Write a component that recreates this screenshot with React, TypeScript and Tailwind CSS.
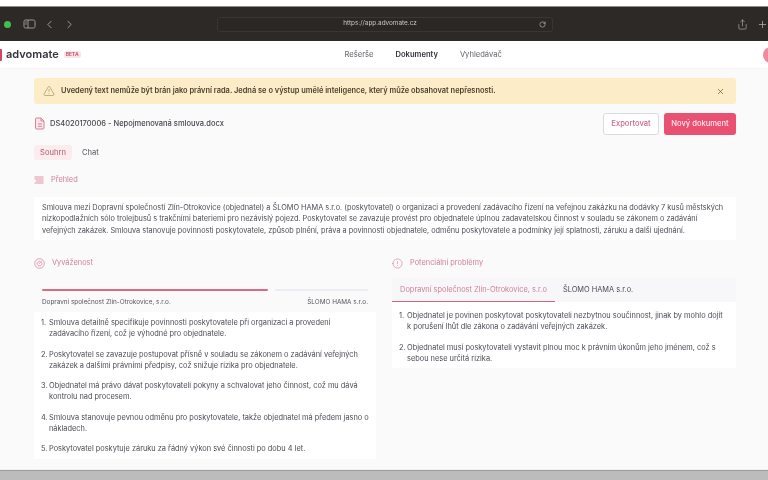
import React from 'react';
import { ChevronLeft, ChevronRight, Info, Plus, RotateCw, Share, TriangleAlert, X } from 'lucide-react';

const advantages = [
  'Smlouva detailně specifikuje povinnosti poskytovatele při organizaci a provedení zadávacího řízení, což je výhodné pro objednatele.',
  'Poskytovatel se zavazuje postupovat přísně v souladu se zákonem o zadávání veřejných zakázek a dalšími právními předpisy, což snižuje rizika pro objednatele.',
  'Objednatel má právo dávat poskytovateli pokyny a schvalovat jeho činnost, což mu dává kontrolu nad procesem.',
  'Smlouva stanovuje pevnou odměnu pro poskytovatele, takže objednatel má předem jasno o nákladech.',
  'Poskytovatel poskytuje záruku za řádný výkon své činnosti po dobu 4 let.',
];

const problems = [
  'Objednatel je povinen poskytovat poskytovateli nezbytnou součinnost, jinak by mohlo dojít k porušení lhůt dle zákona o zadávání veřejných zakázek.',
  'Objednatel musí poskytovateli vystavit plnou moc k právním úkonům jeho jménem, což s sebou nese určitá rizika.',
];

const NumberedList: React.FC<{ items: string[]; className: string }> = ({ items, className }) => (
  <ol className={`flex flex-col gap-[9px] bg-white text-[7.4px] leading-[11.3px] text-[#4b4b55] ${className}`}>
    {items.map((item, i) => (
      <li key={i} className="flex">
        <span className="w-[8px] shrink-0">{i + 1}.</span>
        <span>{item}</span>
      </li>
    ))}
  </ol>
);

const SectionTitle: React.FC<{ icon: React.ReactNode; label: string }> = ({ icon, label }) => (
  <div className="flex h-[14px] items-center gap-[7px] text-[7.4px] text-[#d0809a]">
    {icon}
    <span>{label}</span>
  </div>
);

export default function App() {
  return (
    <div className="flex h-[480px] w-[768px] flex-col overflow-hidden bg-white font-['Inter',sans-serif] blur-[0.5px]">
      <div className="h-[6px] shrink-0 bg-white" />

      {/* Browser bar */}
      <div className="flex h-[35px] shrink-0 items-center border-t border-[#8b8b88] bg-[#2c2927] pl-[4px] text-[#b5b3b0]">
        <span className="h-[7px] w-[7px] rounded-full bg-[#3fbf4f]" />
        <svg width="13" height="10" viewBox="0 0 13 10" fill="none" stroke="#9a9896" strokeWidth="1" className="ml-[12px]">
          <rect x="1" y="1" width="11" height="8" rx="1.5" />
          <path d="M5 1v8M2.2 3h1.6M2.2 5h1.6" />
        </svg>
        <ChevronLeft size={13} strokeWidth={1.5} className="ml-[7px]" />
        <ChevronRight size={13} strokeWidth={1.5} className="ml-[7px]" />
        <div className="relative ml-[141px] flex h-[15px] w-[336px] shrink-0 items-center justify-center rounded-[3px] border border-[#393634] bg-[#2a2725] pr-[10px] text-[6.4px] text-[#c9c7c4]">
          <span>https://app.advomate.cz</span>
          <RotateCw size={7} strokeWidth={2} className="absolute right-[6px] top-[3px]" />
        </div>
        <Share size={11} strokeWidth={1.4} className="ml-[184px] shrink-0" />
        <Plus size={11} strokeWidth={1.6} className="ml-[9px] shrink-0" />
      </div>

      {/* App nav */}
      <div className="flex h-[28px] shrink-0 items-center border-b border-[#f5f5f6] bg-white">
        <span className="h-[12px] w-[2px] shrink-0 rounded-r-[1px] bg-[#d9435f]" />
        <span className="ml-[4px] text-[11px] font-semibold leading-none text-[#33333c]">advomate</span>
        <span className="ml-[5px] rounded-[2px] bg-[#fbe3e8] px-[2px] text-[5px] font-semibold leading-[7px] text-[#c2476a]">BETA</span>
        <div className="ml-[264px] flex shrink-0 items-center gap-[22px] text-[7.6px]">
          <span className="text-[#63636b]">Rešerše</span>
          <span className="font-semibold text-[#33333b]">Dokumenty</span>
          <span className="text-[#63636b]">Vyhledávač</span>
        </div>
        <span className="ml-[261px] h-[16px] w-[16px] shrink-0 rounded-full bg-[#ee8a9c]" />
      </div>

      {/* Content */}
      <div className="flex flex-1 flex-col bg-[#fafafa] pl-[34px] pr-[32px] pt-[9px]">
        <div className="flex h-[26px] shrink-0 items-center rounded-[3px] bg-[#fcedc8] pl-[9px] pr-[11px] text-[7.45px] font-semibold text-[#4a3f2a]">
          <TriangleAlert size={12} strokeWidth={1.4} className="text-[#a8925f]" />
          <span className="ml-[6px] flex-1">Uvedený text nemůže být brán jako právní rada. Jedná se o výstup umělé inteligence, který může obsahovat nepřesnosti.</span>
          <X size={9} strokeWidth={1.8} className="text-[#5c5340]" />
        </div>

        <div className="mt-[8px] flex h-[23px] shrink-0 items-center">
          <svg width="12" height="13" viewBox="0 0 12 13" fill="#fbe6ec" stroke="#dc7f9a" strokeWidth="1" className="shrink-0">
            <path d="M2.5 1h4.5l3 3v7a1 1 0 0 1-1 1h-6.500a1 1 0 0 1-1-1v-9a1 1 0 0 1 1-1z" />
            <path d="M7 1v3h3M4 7h4M4 9.300h4" fill="none" />
          </svg>
          <span className="ml-[4px] flex-1 text-[7.5px] font-medium text-[#45454d]">DS4020170006 - Nepojmenovaná smlouva.docx</span>
          <span className="flex h-[22px] w-[56px] items-center justify-center rounded-[3px] border border-[#dcdcdf] bg-white text-[7.6px] font-medium text-[#d0688a]">Exportovat</span>
          <span className="ml-[5px] flex h-[22px] w-[72px] items-center justify-center rounded-[3px] bg-[#ea5072] text-[7.6px] font-medium text-[#fde8ec]">Nový dokument</span>
        </div>

        <div className="mt-[10px] flex h-[15px] shrink-0 items-center text-[7.6px]">
          <span className="flex h-[15px] w-[38px] items-center justify-center rounded-[3px] bg-[#fcecee] text-[#b5566f]">Souhrn</span>
          <span className="ml-[10px] text-[#55555d]">Chat</span>
        </div>

        <div className="mt-[13px] shrink-0">
          <SectionTitle
            icon={
              <svg width="10" height="8" viewBox="0 0 10 8" fill="none" stroke="#e0788f" strokeWidth="0.8">
                <path d="M0.500 1h9M0.500 3h9M2 5h7.500M0.500 7h9" />
              </svg>
            }
            label="Přehled"
          />
        </div>

        <p className="mt-[10px] h-[43px] shrink-0 bg-white pl-[8px] pr-[6px] pt-[5px] text-[7.33px] leading-[11.3px] text-[#4b4b55]">
          Smlouva mezi Dopravní společností Zlín-Otrokovice (objednatel) a ŠLOMO HAMA s.r.o. (poskytovatel) o organizaci a provedení zadávacího řízení na veřejnou zakázku na dodávky 7 kusů městských nízkopodlažních sólo trolejbusů s trakčními bateriemi pro nezávislý pojezd. Poskytovatel se zavazuje provést pro objednatele úplnou zadavatelskou činnost v souladu se zákonem o zadávání veřejných zakázek. Smlouva stanovuje povinnosti poskytovatele, způsob plnění, práva a povinnosti objednatele, odměnu poskytovatele a podmínky její splatnosti, záruku a další ujednání.
        </p>

        <div className="mt-[16px] grid grid-cols-[342px_344px] gap-[16px]">
          <div>
            <SectionTitle
              icon={
                <svg width="11" height="11" viewBox="0 0 11 11" fill="none" stroke="#e29db1" strokeWidth="1" className="shrink-0">
                  <circle cx="5.500" cy="5.500" r="4.800" />
                  <path d="M7.600 4.300a2.400 2.400 0 1 1-1.200-1.000M5 5.800l2.900-3.100" />
                </svg>
              }
              label="Vyváženost"
            />
            <div className="mt-[19px] flex gap-[7px] px-[8px]">
              <div className="h-[2px] w-[226px] rounded-full bg-[#dd6a85]" />
              <div className="h-[2px] flex-1 rounded-full bg-[#ecedf2]" />
            </div>
            <div className="mt-[7px] flex justify-between px-[8px] text-[6.4px] leading-[9px] text-[#55555d]">
              <span>Dopravní společnost Zlín-Otrokovice, s.r.o.</span>
              <span>ŠLOMO HAMA s.r.o.</span>
            </div>
            <NumberedList items={advantages} className="mt-[5px] h-[147px] pl-[7px] pr-[6px] pt-[5px]" />
          </div>

          <div>
            <SectionTitle icon={<Info size={11} strokeWidth={1.4} className="shrink-0 rotate-180 text-[#dc7f9a]" />} label="Potenciální problémy" />
            <div className="mt-[8px] flex h-[24px] items-center bg-[#f7f7f9] text-[7.4px]">
              <span className="flex h-[24px] w-[163px] items-center justify-center border-b border-[#d9647f] text-[#d0809a]">Dopravní společnost Zlín-Otrokovice, s.r.o</span>
              <span className="ml-[8px] text-[#4b4b55]">ŠLOMO HAMA s.r.o.</span>
            </div>
            <NumberedList items={problems} className="h-[66px] pl-[7px] pr-[8px] pt-[8px]" />
          </div>
        </div>
      </div>

      <div className="h-[1px] shrink-0 bg-[#f0f0f0]" />
      <div className="h-[10px] shrink-0 border-t border-[#9c9c9c] bg-[#bcbcbc]" />
    </div>
  );
}
